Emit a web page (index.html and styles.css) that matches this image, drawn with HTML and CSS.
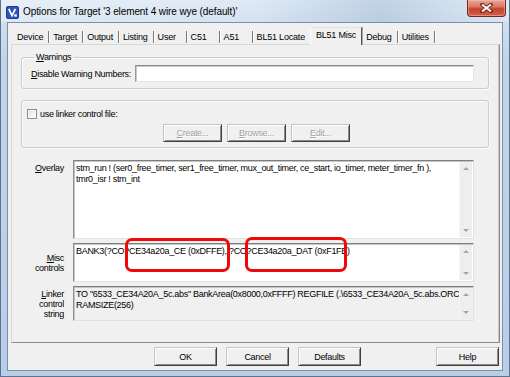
FILE: index.html
```html
<!DOCTYPE html>
<html>
<head>
<meta charset="utf-8">
<title>Options for Target</title>
<link rel="stylesheet" href="styles.css">
</head>
<body>
<div class="window">
  <div class="titlebar">
    <svg class="app-icon" width="13" height="13" viewBox="0 0 13 13">
      <rect x="0.5" y="0.5" width="12" height="12" rx="1.5" fill="#2d55bd" stroke="#1b3a8a"/>
      <path d="M2.8 2.8 L6 9.6 L9.4 2.8" fill="none" stroke="#fff" stroke-width="1.7"/>
      <rect x="8.2" y="8.4" width="2.6" height="2.2" fill="#fff"/>
    </svg>
    <span class="title">Options for Target '3 element 4 wire wye (default)'</span>
    <div class="close">
      <svg width="13" height="10" viewBox="0 0 13 10">
        <path d="M2 1.5 L11 8.5 M11 1.5 L2 8.5" stroke="#6a2418" stroke-width="3.6" stroke-linecap="round"/>
        <path d="M2 1.5 L11 8.5 M11 1.5 L2 8.5" stroke="#fff" stroke-width="2"/>
      </svg>
    </div>
  </div>
  <div class="client">
    <div class="tabs">
      <span class="tab">Device</span>
      <span class="tab">Target</span>
      <span class="tab">Output</span>
      <span class="tab">Listing</span>
      <span class="tab">User</span>
      <span class="tab">C51</span>
      <span class="tab">A51</span>
      <span class="tab">BL51 Locate</span>
      <span class="tab selected">BL51 Misc</span>
      <span class="tab">Debug</span>
      <span class="tab">Utilities</span>
    </div>
    <div class="panel">
      <fieldset class="group warnings">
        <legend><u>W</u>arnings</legend>
        <div class="warn-row">
          <span class="warn-label"><u>D</u>isable Warning Numbers:</span>
          <div class="input"></div>
        </div>
      </fieldset>
      <fieldset class="group linker-file">
        <div class="check-row"><span class="checkbox"></span><span>use linker control file:</span></div>
        <div class="btn-row">
          <span class="btn disabled"><u>C</u>reate...</span>
          <span class="btn disabled"><u>B</u>rowse...</span>
          <span class="btn disabled"><u>E</u>dit...</span>
        </div>
      </fieldset>
      <div class="fields">
        <div class="flabel top"><u>O</u>verlay</div>
        <div class="textbox">
          <div class="text">stm_run ! (ser0_free_timer, ser1_free_timer, mux_out_timer, ce_start, io_timer, meter_timer_fn ),<br>tmr0_isr ! stm_int</div>
          <div class="vscroll"><span class="arr up"></span><span class="arr down"></span></div>
        </div>
        <div class="flabel"><span><u>M</u>isc<br>controls</span></div>
        <div class="textbox misc">
          <div class="text">BANK3(?CO?CE34a20a_CE (0xDFFE), ?CO?CE34a20a_DAT (0xF1FE)</div>
          <div class="vscroll"><span class="arr up"></span><span class="arr down"></span></div>
          <span class="mark mark1"></span>
          <span class="mark mark2"></span>
        </div>
        <div class="flabel"><span><u>L</u>inker<br>control<br>string</span></div>
        <div class="textbox readonly">
          <div class="text">TO "6533_CE34A20A_5c.abs" BankArea(0x8000,0xFFFF) REGFILE (.\6533_CE34A20A_5c.abs.ORC<br>RAMSIZE(256)</div>
          <div class="vscroll"><span class="arr up"></span><span class="arr down"></span></div>
        </div>
      </div>
    </div>
    <div class="buttons">
      <span class="btn big">OK</span>
      <span class="btn big">Cancel</span>
      <span class="btn big">Defaults</span>
      <span class="btn big help">Help</span>
    </div>
  </div>
</div>
</body>
</html>
```

FILE: styles.css
```css
* { box-sizing: border-box; }
html, body { margin: 0; padding: 0; }
body {
  width: 510px;
  height: 377px;
  overflow: hidden;
  background: #c3d5ea;
  font-family: "Liberation Sans", Arial, sans-serif;
  font-size: 9px;
  letter-spacing: -0.3px;
  color: #000;
}
.window {
  width: 510px;
  height: 377px;
  display: flex;
  flex-direction: column;
  align-items: flex-start;
  border-left: 1px solid #5f728c;
  border-right: 1px solid #5f728c;
  border-bottom: 1px solid #5f728c;
  background: linear-gradient(to bottom, #dbe7f4 0, #cfdff0 22px, #c1d4ea 60px, #b9cee7 100%);
}
.titlebar {
  width: 100%;
  height: 22px;
  display: flex;
  align-items: flex-start;
  padding-left: 5px;
  background: linear-gradient(to right, rgba(255,255,255,0.35) 0, rgba(255,255,255,0.1) 50%, rgba(120,150,180,0.25) 75%, rgba(255,255,255,0.2) 100%);
}
.app-icon { margin-top: 6px; flex: none; }
.title {
  margin-top: 6px;
  margin-left: 4px;
  font-size: 10px;
  line-height: 12px;
  letter-spacing: -0.1px;
  color: #000;
  white-space: nowrap;
}
.close {
  margin-left: auto;
  margin-right: 3px;
  width: 39px;
  height: 17px;
  display: flex;
  align-items: center;
  justify-content: center;
  border: 1px solid #6e2a20;
  border-top: none;
  border-radius: 0 0 4px 4px;
  background: linear-gradient(to bottom, #e8a595 0, #d97b69 40%, #c7412d 55%, #d2604a 100%);
  box-shadow: inset 0 0 0 1px rgba(255,200,190,0.45);
}
.client {
  margin-left: 6px;
  width: 496px;
  height: 349px;
  border: 1px solid #7d8ea6;
  background: #f0f0f0;
  padding: 4px 2px 0 3px;
  display: flex;
  flex-direction: column;
}
.tabs {
  height: 17px;
  display: flex;
  align-items: flex-end;
  padding-left: 2px;
  letter-spacing: -0.2px;
}
.tab {
  height: 12px;
  line-height: 12px;
  min-width: 33px;
  padding: 0 5px 0 4px;
  border-right: 1px solid #7a7a7a;
  box-shadow: 1px 0 0 #ffffff;
  white-space: nowrap;
  margin-bottom: 1px;
}
.tab.selected {
  position: relative;
  z-index: 1;
  height: 18px;
  line-height: 14px;
  margin-bottom: -1px;
  padding: 0 5px 0 5px;
  background: #f0f0f0;
  border-top: 1px solid #e2e2e2;
  border-left: 1px solid #ffffff;
  border-right: 1px solid #555;
  box-shadow: 1px 0 0 #a8a8a8;
  margin-left: -1px;
}
.panel {
  width: 489px;
  height: 299px;
  border: 1px solid;
  border-color: #d8d8d8 #8a8a8a #8a8a8a #d8d8d8;
  box-shadow: inset -1px 0 0 #c8c8c8;
  display: flex;
  flex-direction: column;
  padding: 0 10px 0 9px;
}
.group {
  margin: 0;
  border: 1px solid #c9ccd0;
  border-radius: 3px;
  box-shadow: inset 1px 1px 0 #fbfbfb, 1px 1px 0 #fbfbfb;
  min-width: 0;
}
.warnings {
  margin-top: 7px;
  padding: 2px 14px 6px 9px;
}
.warnings legend {
  margin-left: 3px;
  padding: 0 2px;
  line-height: 11px;
}
.warn-row {
  display: flex;
  align-items: center;
}
.warn-label {
  flex: none;
  width: 104px;
  white-space: nowrap;
}
.input {
  flex: 1;
  height: 17px;
  background: #fff;
  border: 1px solid;
  border-color: #8a8a8a #e4e4e4 #e4e4e4 #9a9a9a;
  box-shadow: inset 1px 1px 0 #c9c9c9;
}
.linker-file {
  margin-top: 11px;
  padding: 8px 5px 5px 5px;
}
.check-row {
  display: flex;
  align-items: center;
  gap: 3px;
  height: 10px;
  line-height: 10px;
}
.checkbox {
  width: 10px;
  height: 10px;
  border: 1px solid #8e8f8f;
  background: linear-gradient(135deg, #dcdcdc 0, #f4f4f4 60%, #ffffff 100%);
  box-shadow: inset 0 0 0 1px #f6f6f6;
}
.btn-row {
  display: flex;
  gap: 5px;
  margin-top: 5px;
  padding-left: 136px;
}
.btn {
  display: flex;
  align-items: center;
  justify-content: center;
  width: 59px;
  height: 18px;
  background: #f0f0f0;
  border: 1px solid;
  border-color: #c4c4c4 #404040 #404040 #c4c4c4;
  box-shadow: inset 1px 1px 0 #ffffff, inset -1px -1px 0 #8c8c8c;
  white-space: nowrap;
}
.btn.disabled { color: #a2a2a2; text-shadow: 1px 1px 0 #ffffff; }
.fields {
  margin-top: 12px;
  margin-left: -9px;
  display: grid;
  grid-template-columns: 52px 401px;
  grid-template-rows: 79px 39px 35px;
  column-gap: 9px;
  row-gap: 4px;
}
.flabel {
  display: flex;
  align-items: center;
  justify-content: flex-end;
  text-align: right;
  line-height: 10px;
}
.flabel.top { align-items: flex-start; padding-top: 3px; }
.textbox {
  position: relative;
  display: flex;
  background: #fff;
  border: 1px solid;
  border-color: #7e7e7e #e2e2e2 #e2e2e2 #8e8e8e;
  box-shadow: inset 1px 1px 0 #c6c6c6;
}
.textbox.readonly { background: #f0f0f0; }
.text {
  flex: 1;
  min-width: 0;
  overflow: hidden;
  white-space: nowrap;
  padding: 2px 0 0 2px;
  line-height: 11px;
}
.vscroll {
  flex: none;
  width: 13px;
  margin: 1px 1px 1px 0;
  background: #eeeeee;
  border-left: 1px solid #f6f6f6;
  display: flex;
  flex-direction: column;
  justify-content: space-between;
  align-items: center;
  padding: 5px 0 5px;
}
.arr {
  width: 0;
  height: 0;
  border-left: 3px solid transparent;
  border-right: 3px solid transparent;
}
.arr.up { border-bottom: 3px solid #a6a6a6; }
.arr.down { border-top: 3px solid #a6a6a6; }
.mark {
  position: absolute;
  border: 3px solid #ee0a0a;
  border-radius: 7px;
}
.mark1 { left: 51px; top: -6px; width: 105px; height: 34px; }
.mark2 { left: 171px; top: -7px; width: 102px; height: 35px; }
.buttons {
  display: flex;
  gap: 9px;
  margin-top: 4px;
  padding-left: 143px;
  padding-right: 1px;
}
.btn.big { width: 63px; height: 19px; }
.btn.help { margin-left: auto; }
```
